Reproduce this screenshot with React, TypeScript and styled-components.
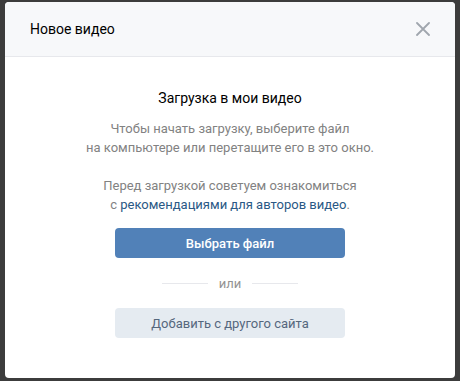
import styled, { createGlobalStyle } from "styled-components";

const GlobalStyle = createGlobalStyle`
  html, body {
    margin: 0;
    padding: 0;
    background: #3c3c3c;
  }

  body {
    font-family: Roboto, "Open Sans", "Liberation Sans", sans-serif;
    -webkit-font-smoothing: antialiased;
  }
`;

const Page = styled.div`
  width: 460px;
  height: 381px;
  padding: 2px 0 0 5px;
  box-sizing: border-box;
`;

const Modal = styled.div`
  width: 450px;
  height: 376px;
  background: #fff;
  border-radius: 4px;
  overflow: hidden;
  display: flex;
  flex-direction: column;
`;

const Header = styled.div`
  height: 54px;
  display: flex;
  align-items: center;
  justify-content: space-between;
  padding: 0 23px 0 25px;
  background: #f7f8fa;
  border-bottom: 1px solid #e7e8ec;
`;

const Title = styled.div`
  font-size: 14px;
  color: #000;
`;

const CloseButton = styled.button`
  width: 18px;
  height: 18px;
  padding: 0;
  border: 0;
  background: none;
  cursor: pointer;
  display: flex;
  align-items: center;
  justify-content: center;
`;

const Body = styled.div`
  display: flex;
  flex-direction: column;
  align-items: center;
  padding-top: 31px;
`;

const Heading = styled.div`
  font-size: 14px;
  line-height: 20px;
  color: #000;
  margin-bottom: 11px;
`;

const Hint = styled.p<{ $gap?: number }>`
  margin: 0 0 ${(p) => p.$gap ?? 0}px;
  font-size: 13px;
  line-height: 19px;
  color: #828282;
  text-align: center;
`;

const TextLink = styled.a`
  color: #2a5885;
  text-decoration: none;
`;

const Button = styled.button<{ $secondary?: boolean }>`
  width: 230px;
  height: 30px;
  border: 0;
  border-radius: 4px;
  font-family: inherit;
  font-size: 13px;
  cursor: pointer;
  background: ${(p) => (p.$secondary ? "#e5ebf1" : "#5181b8")};
  color: ${(p) => (p.$secondary ? "#55677d" : "#fff")};
  font-weight: ${(p) => (p.$secondary ? 400 : 500)};
`;

const Divider = styled.div`
  display: flex;
  align-items: center;
  gap: 11px;
  margin: 16px 0 15px;
  font-size: 13px;
  line-height: 19px;
  color: #939393;

  &::before,
  &::after {
    content: "";
    width: 46px;
    height: 1px;
    background: #e7e8ec;
  }
`;

const App = () => {
  return (
    <Page>
      <GlobalStyle />
      <Modal>
        <Header>
          <Title>Новое видео</Title>
          <CloseButton aria-label="Закрыть">
            <svg width="14" height="14" viewBox="0 0 14 14">
              <path
                d="M1 1 L13 13 M13 1 L1 13"
                stroke="#a0a6ae"
                strokeWidth="1.8"
                strokeLinecap="round"
              />
            </svg>
          </CloseButton>
        </Header>
        <Body>
          <Heading>Загрузка в мои видео</Heading>
          <Hint $gap={19}>
            Чтобы начать загрузку, выберите файл
            <br />
            на компьютере или перетащите его в это окно.
          </Hint>
          <Hint $gap={14}>
            Перед загрузкой советуем ознакомиться
            <br />с <TextLink href="#">рекомендациями для авторов видео</TextLink>.
          </Hint>
          <Button>Выбрать файл</Button>
          <Divider>или</Divider>
          <Button $secondary>Добавить с другого сайта</Button>
        </Body>
      </Modal>
    </Page>
  );
};

export default App;
